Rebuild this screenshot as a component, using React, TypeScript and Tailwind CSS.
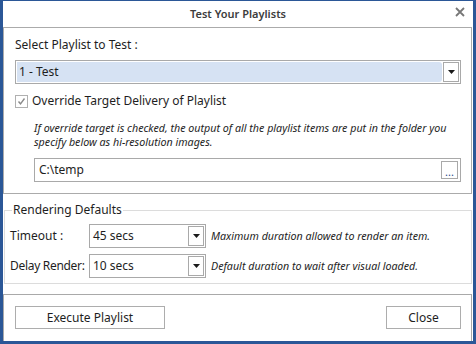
import React from "react";

function Arrow() {
  return (
    <svg width="7" height="4" viewBox="0 0 7 4">
      <path d="M0 0H7L3.5 4Z" fill="#1a1a1a" />
    </svg>
  );
}

function Combo({ value, width, filled }: { value: string; width: string; filled?: boolean }) {
  return (
    <div className={`${width} h-[24px] border border-[#a9a9a9] p-[1px] flex gap-[1px] bg-white`}>
      <div
        className={`flex-1 flex items-center pl-[2px] text-[12px] text-[#1e1e1e] ${
          filled ? "bg-[#d6e2f3] rounded-r-[3px]" : ""
        }`}
      >
        {value}
      </div>
      <div className="w-[16px] border border-[#a9a9a9] bg-white flex items-center justify-center">
        <Arrow />
      </div>
    </div>
  );
}

export default function App() {
  return (
    <div className="w-[476px] h-[344px] bg-[#2b5797] pl-[3px] pr-[3px] pt-[1px] pb-[3px] font-['Noto_Sans',sans-serif] text-[#1e1e1e]">
      <div className="w-full h-full bg-white flex flex-col">
        {/* title bar */}
        <div className="h-[26px] relative flex items-center justify-center">
          <span className="text-[11px] font-semibold text-[#3c3c3c]">Test Your Playlists</span>
          <svg className="absolute right-[8px] top-[6px]" width="10" height="10" viewBox="0 0 10 10">
            <path d="M1 1L9 9M9 1L1 9" stroke="#777" strokeWidth="1.8" />
          </svg>
        </div>

        {/* top panel */}
        <div className="mr-[1px] border border-[#ababab] pl-[11px] pr-[10px] pt-[9px] pb-[11px] flex flex-col">
          <div className="h-[16px] leading-[16px] text-[12px]">Select Playlist to Test :</div>
          <div className="mt-[7px]">
            <Combo value="1 - Test" width="w-full" filled />
          </div>
          <div className="mt-[9px] h-[16px] flex items-center gap-[4px]">
            <div className="w-[13px] h-[13px] border border-[#b0b0b0] flex items-center justify-center">
              <svg width="9" height="9" viewBox="0 0 9 9">
                <path d="M1.5 4.5L3.5 6.8L7.5 1.5" stroke="#8a8a8a" strokeWidth="1.4" fill="none" />
              </svg>
            </div>
            <span className="text-[12px] leading-[16px]">Override Target Delivery of Playlist</span>
          </div>
          <div className="mt-[12px] pl-[19px] italic text-[10.7px] leading-[14px] text-[#1e1e1e]">
            <div className="whitespace-nowrap">If override target is checked, the output of all the playlist items are put in the folder you</div>
            <div>specify below as hi-resolution images.</div>
          </div>
          <div className="mt-[9px] ml-[19px] h-[24px] border border-[#a9a9a9] flex items-center pl-[4px] pr-[2px]">
            <span className="flex-1 text-[12px]">C:\temp</span>
            <div className="w-[17px] h-[18px] border border-[#a9a9a9] flex items-end justify-center text-[11px] leading-[12px] text-[#2a4d8a]">
              ...
            </div>
          </div>
        </div>

        {/* rendering defaults */}
        <fieldset className="mt-[8px] ml-[1px] mr-[1px] border border-[#dcdcdc] pb-[5px]">
          <legend className="ml-[7px] px-[1px] h-[16px] leading-[16px] text-[12px]">Rendering Defaults</legend>
          <div className="mt-[6px] flex items-center pl-[5px] h-[24px]">
            <span className="w-[79px] whitespace-nowrap text-[12px]">Timeout :</span>
            <Combo value="45 secs" width="w-[117px]" />
            <span className="ml-[5px] whitespace-nowrap italic text-[10.7px]">Maximum duration allowed to render an item.</span>
          </div>
          <div className="mt-[6px] flex items-center pl-[5px] h-[24px]">
            <span className="w-[79px] whitespace-nowrap text-[12px] tracking-[-0.3px]">Delay Render:</span>
            <Combo value="10 secs" width="w-[117px]" />
            <span className="ml-[5px] whitespace-nowrap italic text-[10.7px]">Default duration to wait after visual loaded.</span>
          </div>
        </fieldset>

        {/* bottom panel */}
        <div className="mt-[10px] mr-[1px] flex-1 border-t border-l border-r border-[#a9a9a9] pl-[11px] pr-[10px] pt-[11px] flex justify-between items-start">
          <button className="w-[150px] h-[23px] border border-[#adadad] bg-white text-[12px]">Execute Playlist</button>
          <button className="w-[75px] h-[23px] border border-[#adadad] bg-white text-[12px]">Close</button>
        </div>
      </div>
    </div>
  );
}
